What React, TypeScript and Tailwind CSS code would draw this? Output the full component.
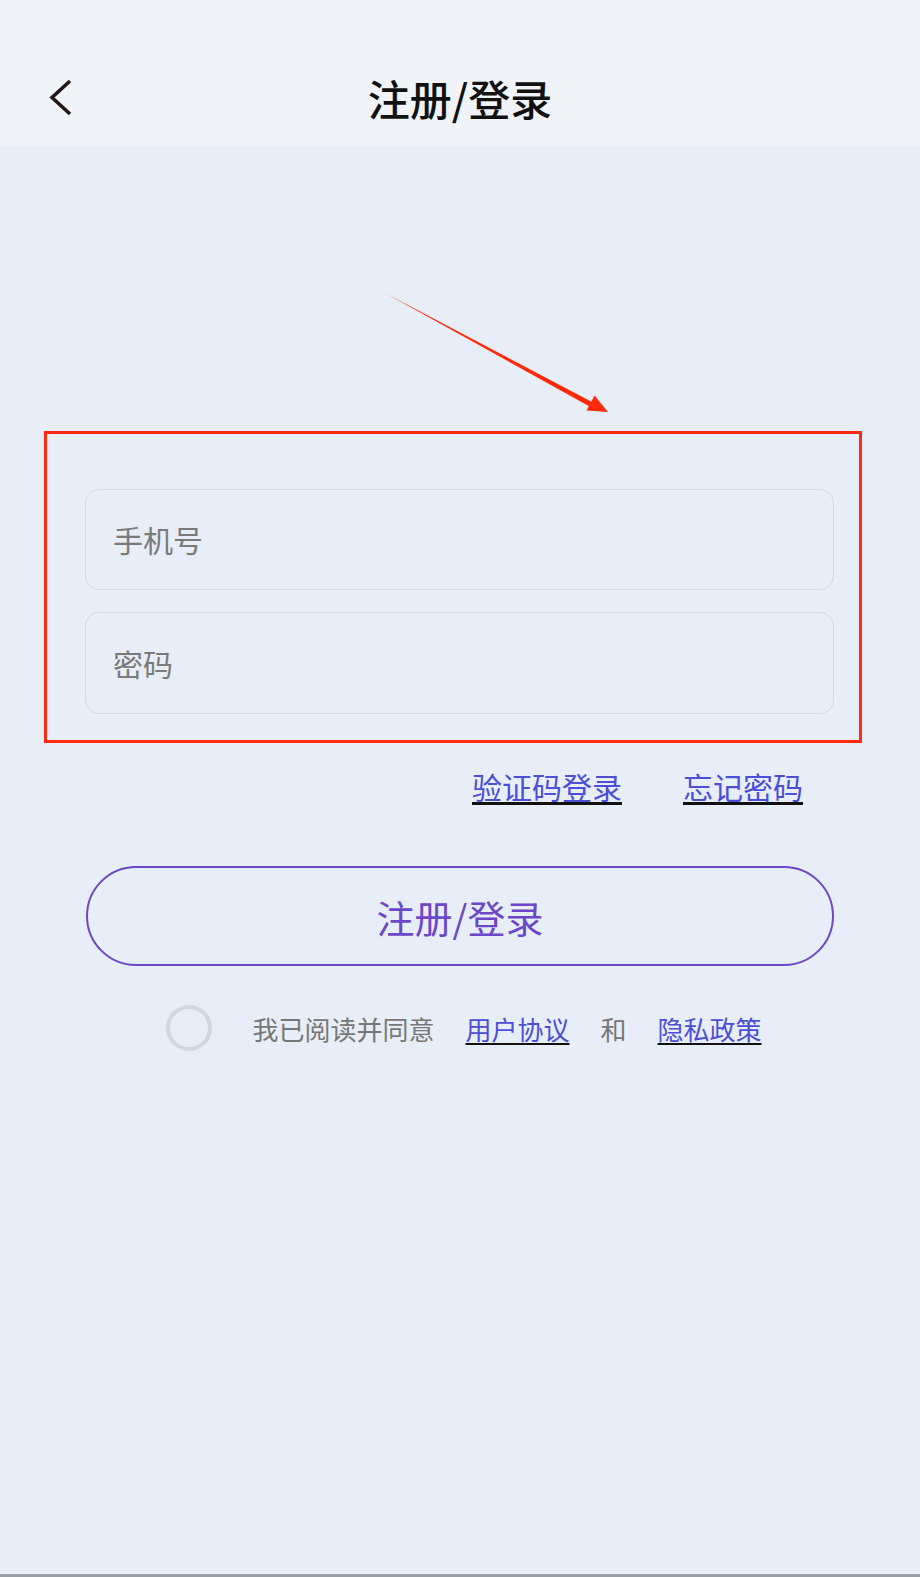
import { useState } from 'react'

const font = { fontFamily: '"Noto Sans CJK SC", "Noto Sans", sans-serif' }

export default function App() {
  const [phone, setPhone] = useState('')
  const [pwd, setPwd] = useState('')
  const [agree, setAgree] = useState(false)

  return (
    <div className="min-h-[1577px] flex flex-col bg-[#e7eef7]" style={font}>
      {/* Header */}
      <div className="h-[145px] pt-[50px] bg-[#f0f4f9]">
        <div className="h-[95px] grid grid-cols-[1fr_auto_1fr] items-center">
          <button className="pl-[48px] justify-self-start">
            <svg width="26" height="40" viewBox="0 0 26 40">
              <polyline points="22,3 4,19.5 22,36" fill="none" stroke="#231815" strokeWidth="3.6" />
            </svg>
          </button>
          <h1 className="text-[42px] leading-none font-medium text-[#111]">注册/登录</h1>
          <div />
        </div>
      </div>

      {/* Arrow */}
      <svg width="920" height="286" viewBox="0 0 920 286" className="block">
        <polygon points="385,148 593,257.5 590.5,262 " fill="#ff2a0a" />
        <polygon points="608,267 594.5,250.5 586.5,265.5" fill="#ff2a0a" />
      </svg>

      {/* Form */}
      <div className="ml-[44px] w-[818px] border-[3px] border-[#ff2a0f] pt-[55px] pb-[26px] pl-[38px] pr-[25px] flex flex-col gap-[22px]">
        <div className="h-[101px] rounded-[14px] border border-[#d2dae6] px-[27px] flex items-center">
          <input
            value={phone}
            onChange={e => setPhone(e.target.value)}
            placeholder="手机号"
            className="w-full bg-transparent outline-none text-[30px] text-[#333] placeholder:text-[#7a7a7a]"
          />
        </div>
        <div className="h-[102px] rounded-[14px] border border-[#d2dae6] px-[27px] flex items-center">
          <input
            type="password"
            value={pwd}
            onChange={e => setPwd(e.target.value)}
            placeholder="密码"
            className="w-full bg-transparent outline-none text-[30px] text-[#333] placeholder:text-[#7a7a7a]"
          />
        </div>
      </div>

      {/* Links */}
      <div className="mt-[28px] flex justify-end gap-[61px] pr-[117px] text-[30px] leading-none">
        <a className="text-[#4b4fd6] underline decoration-[#111] underline-offset-[3px]">验证码登录</a>
        <a className="text-[#4b4fd6] underline decoration-[#111] underline-offset-[3px]">忘记密码</a>
      </div>

      {/* Submit */}
      <button className="mt-[65px] ml-[86px] w-[748px] h-[100px] rounded-full border-2 border-[#6c47c7] text-[38px] text-[#6c47c7]">
        注册/登录
      </button>

      {/* Agreement */}
      <div className="mt-[39px] pl-[8px] flex items-center justify-center text-[26px] text-[#777]">
        <button
          onClick={() => setAgree(!agree)}
          className={`w-[46px] h-[46px] rounded-full border-[4px] ${agree ? 'border-[#6c47c7] bg-[#6c47c7]' : 'border-[#d2d7df]'}`}
        />
        <span className="ml-[40px]">我已阅读并同意</span>
        <a className="ml-[31px] text-[#4b4fd6] underline decoration-[#111] underline-offset-[3px]">用户协议</a>
        <span className="ml-[31px]">和</span>
        <a className="ml-[31px] text-[#4b4fd6] underline decoration-[#111] underline-offset-[3px]">隐私政策</a>
      </div>

      <div className="flex-1" />
      <div className="h-[3px] bg-[#9a9ea5]" />
    </div>
  )
}
